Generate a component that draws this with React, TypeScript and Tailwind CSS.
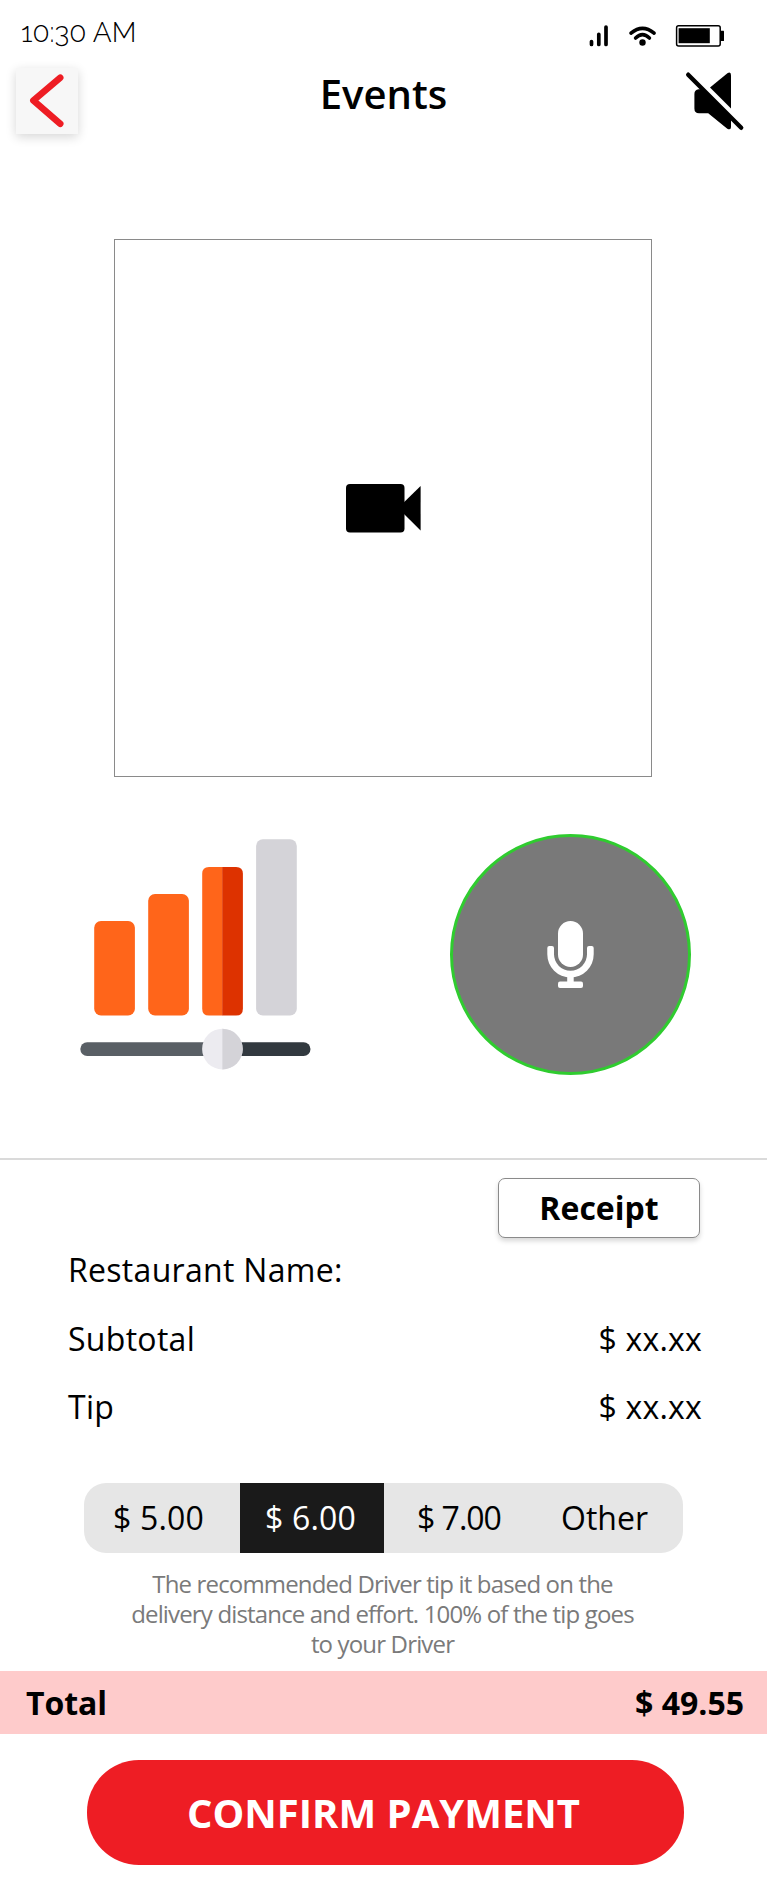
import React from "react";

function StatusBar() {
  return (
    <div className="flex h-[60px] justify-between pl-[21px]">
      <span className="mt-[12px] font-['Raleway','Lato'] text-[28px] leading-[42px] font-light oldstyle-nums">
        10:30 AM
      </span>
      <svg className="mt-[20px] mr-[37px]" width="144" height="32" viewBox="586 20 144 32">
        <g stroke="#000" strokeWidth="4" strokeLinecap="round" fill="none">
          <path d="M591.5 41.5v3M598.8 34.3v10.2M606 27v17.5" strokeWidth="3.7" />
          <path d="M631 33.2Q642.5 23.4 654.1 33.2" strokeWidth="3.6" />
          <path d="M635.6 38Q642.5 31.4 649.4 38" strokeWidth="3.6" />
        </g>
        <circle cx="642.5" cy="42.5" r="3.2" />
        <rect x="676.6" y="25.7" width="43.6" height="20.4" rx="2" fill="none" stroke="#000" strokeWidth="1.5" />
        <rect x="678.6" y="28.2" width="31.2" height="15" />
        <rect x="720" y="30.7" width="4" height="10.3" rx="0.5" />
      </svg>
    </div>
  );
}

function Header() {
  return (
    <header className="flex h-[90px] items-start justify-between pr-[22px] pl-[16px]">
      <button className="mt-[8px] h-[66px] w-[62px] bg-[#f7f7f7] shadow-[0_3px_10px_rgba(0,0,0,0.16)]">
        <svg width="62" height="66" viewBox="16 68 62 66">
          <path
            d="M60.2 77.7L33.4 100.6L60.2 123.8"
            fill="none"
            stroke="#ee1d24"
            strokeWidth="6.6"
            strokeLinecap="round"
            strokeLinejoin="round"
          />
        </svg>
      </button>
      <h1 className="mt-[7px] ml-[4px] text-[40px] leading-[54px] font-semibold">Events</h1>
      <svg className="mt-[10px]" width="60" height="62" viewBox="685 70 60 62">
        <path d="M688.2 74.7L741.2 127.8" stroke="#000" strokeWidth="4.4" strokeLinecap="round" />
        <path d="M710 87.6L727.4 73.2Q731 71.2 731 75.2V108.6Z" />
        <path d="M704 89.2H698.6Q694.4 89.6 694.4 94V108.4Q694.4 113.2 699 113.2H708.2L727.3 128.7Q731 130.6 731 127V116Z" />
      </svg>
    </header>
  );
}

function CameraPreview() {
  return (
    <div className="mt-[89px] ml-[114px] flex h-[538px] w-[538px] items-center justify-center border border-[#8a8a8a]">
      <svg width="76" height="50" viewBox="345 483 76 50">
        <rect x="346" y="484" width="58.5" height="48.5" rx="4" />
        <path d="M404 502.3L420.6 486V530.5L404 514Z" />
      </svg>
    </div>
  );
}

function VolumeMeter() {
  return (
    <svg width="235" height="234" viewBox="78 836 235 234">
      <rect x="94.2" y="921" width="40.7" height="94.6" rx="6.8" fill="#ff651a" />
      <rect x="148.2" y="894" width="40.7" height="121.6" rx="6.8" fill="#ff651a" />
      <path d="M222.4 867H209Q202.2 867 202.2 873.8V1008.8Q202.2 1015.6 209 1015.6H222.4Z" fill="#ff651a" />
      <path d="M222.2 867H236.1Q242.9 867 242.9 873.8V1008.8Q242.9 1015.6 236.1 1015.6H222.2Z" fill="#dd3200" />
      <rect x="256.1" y="839.2" width="40.7" height="176.4" rx="6.8" fill="#d4d3d8" />
      <path d="M222.4 1042.2H87.2A6.9 6.9 0 0 0 87.2 1056H222.4Z" fill="#595f65" />
      <path d="M222.4 1042.2H303.6A6.9 6.9 0 0 1 303.6 1056H222.4Z" fill="#32393f" />
      <circle cx="222.4" cy="1049.1" r="20.3" fill="#ecebf0" />
      <path d="M222.4 1028.8A20.3 20.3 0 0 1 222.4 1069.4Z" fill="#d4d3d8" />
    </svg>
  );
}

function MicButton() {
  return (
    <button className="-mt-[2px] flex h-[241px] w-[241px] items-center justify-center rounded-full border-[3px] border-[#2fcc2f] bg-[#797979]">
      <svg width="49" height="69" viewBox="546 920 49 69">
        <rect x="558" y="921" width="25" height="46" rx="12.5" fill="#fff" />
        <path
          d="M547.3 948Q547.3 946 549.3 946H552Q554 946 554 948V954.3A16.5 16.5 0 0 0 587 954.3V948Q587 946 589 946H591.7Q593.7 946 593.7 948V954.3A23.2 23.2 0 0 1 547.3 954.3Z"
          fill="#fff"
        />
        <path d="M567.2 975H573.7V983H567.2Z" fill="#fff" />
        <rect x="558" y="981.5" width="25" height="6.5" rx="2" fill="#fff" />
      </svg>
    </button>
  );
}

function AmountRow({ label, value }: { label: string; value?: string }) {
  return (
    <div className="flex h-[68.5px] items-center justify-between pr-[65px] pl-[68px] text-[32px]">
      <span className="tracking-[0.3px]">{label}</span>
      <span className="tracking-[0.2px]">{value}</span>
    </div>
  );
}

export default function App() {
  return (
    <div className="h-[1888px] w-[767px] overflow-hidden bg-white font-['Open_Sans',sans-serif] text-black">
      <StatusBar />
      <Header />
      <CameraPreview />

      <section className="mt-[59px] flex h-[322px] items-start justify-between pr-[76px] pl-[78px]">
        <VolumeMeter />
        <MicButton />
      </section>

      <section className="flex h-[513px] flex-col border-t-2 border-[#dadada]">
        <button className="mt-[18px] ml-[498px] h-[60px] w-[202px] shrink-0 rounded-[7px] border border-[#8a8a8a] bg-white text-[32px] leading-[58px] font-bold shadow-[0_3px_5px_rgba(0,0,0,0.16)]">
          Receipt
        </button>
        <div className="-mt-[2px]">
          <AmountRow label="Restaurant Name:" />
          <AmountRow label="Subtotal" value="$ xx.xx" />
          <AmountRow label="Tip" value="$ xx.xx" />
        </div>
        <div className="mt-[41px] ml-[84px] flex h-[70px] w-[599px] shrink-0 overflow-hidden rounded-[22px] bg-[#e6e6e6] text-[32px] leading-[68px]">
          <button className="w-[156px] pt-px pl-[29px] text-left tracking-[0.2px]">$ 5.00</button>
          <button className="w-[144px] bg-[#1a1a1a] pl-[25px] text-left tracking-[0.2px] text-white">$ 6.00</button>
          <button className="w-[147px] pt-px pl-[33px] text-left tracking-[-1px]">$ 7.00</button>
          <button className="w-[152px] pl-[30px] text-left">Other</button>
        </div>
        <p className="mt-[16px] pr-[2px] text-center text-[24px] leading-[30px] tracking-[-0.84px] text-[#7a7a7a]">
          The recommended Driver tip it based on the
          <br />
          delivery distance and effort. 100% of the tip goes
          <br />
          to your Driver
        </p>
      </section>

      <div className="flex h-[63px] items-center justify-between bg-[#fecbcb] pr-[23px] pl-[26px] text-[32px] font-bold">
        <span className="tracking-[-0.1px]">Total</span>
        <span>$ 49.55</span>
      </div>

      <button className="mt-[25.5px] ml-[87px] h-[105px] w-[597px] rounded-[52px] bg-[#ee1d24] pr-[4px] text-[40px] leading-[105px] font-bold text-white">
        CONFIRM PAYMENT
      </button>
    </div>
  );
}
